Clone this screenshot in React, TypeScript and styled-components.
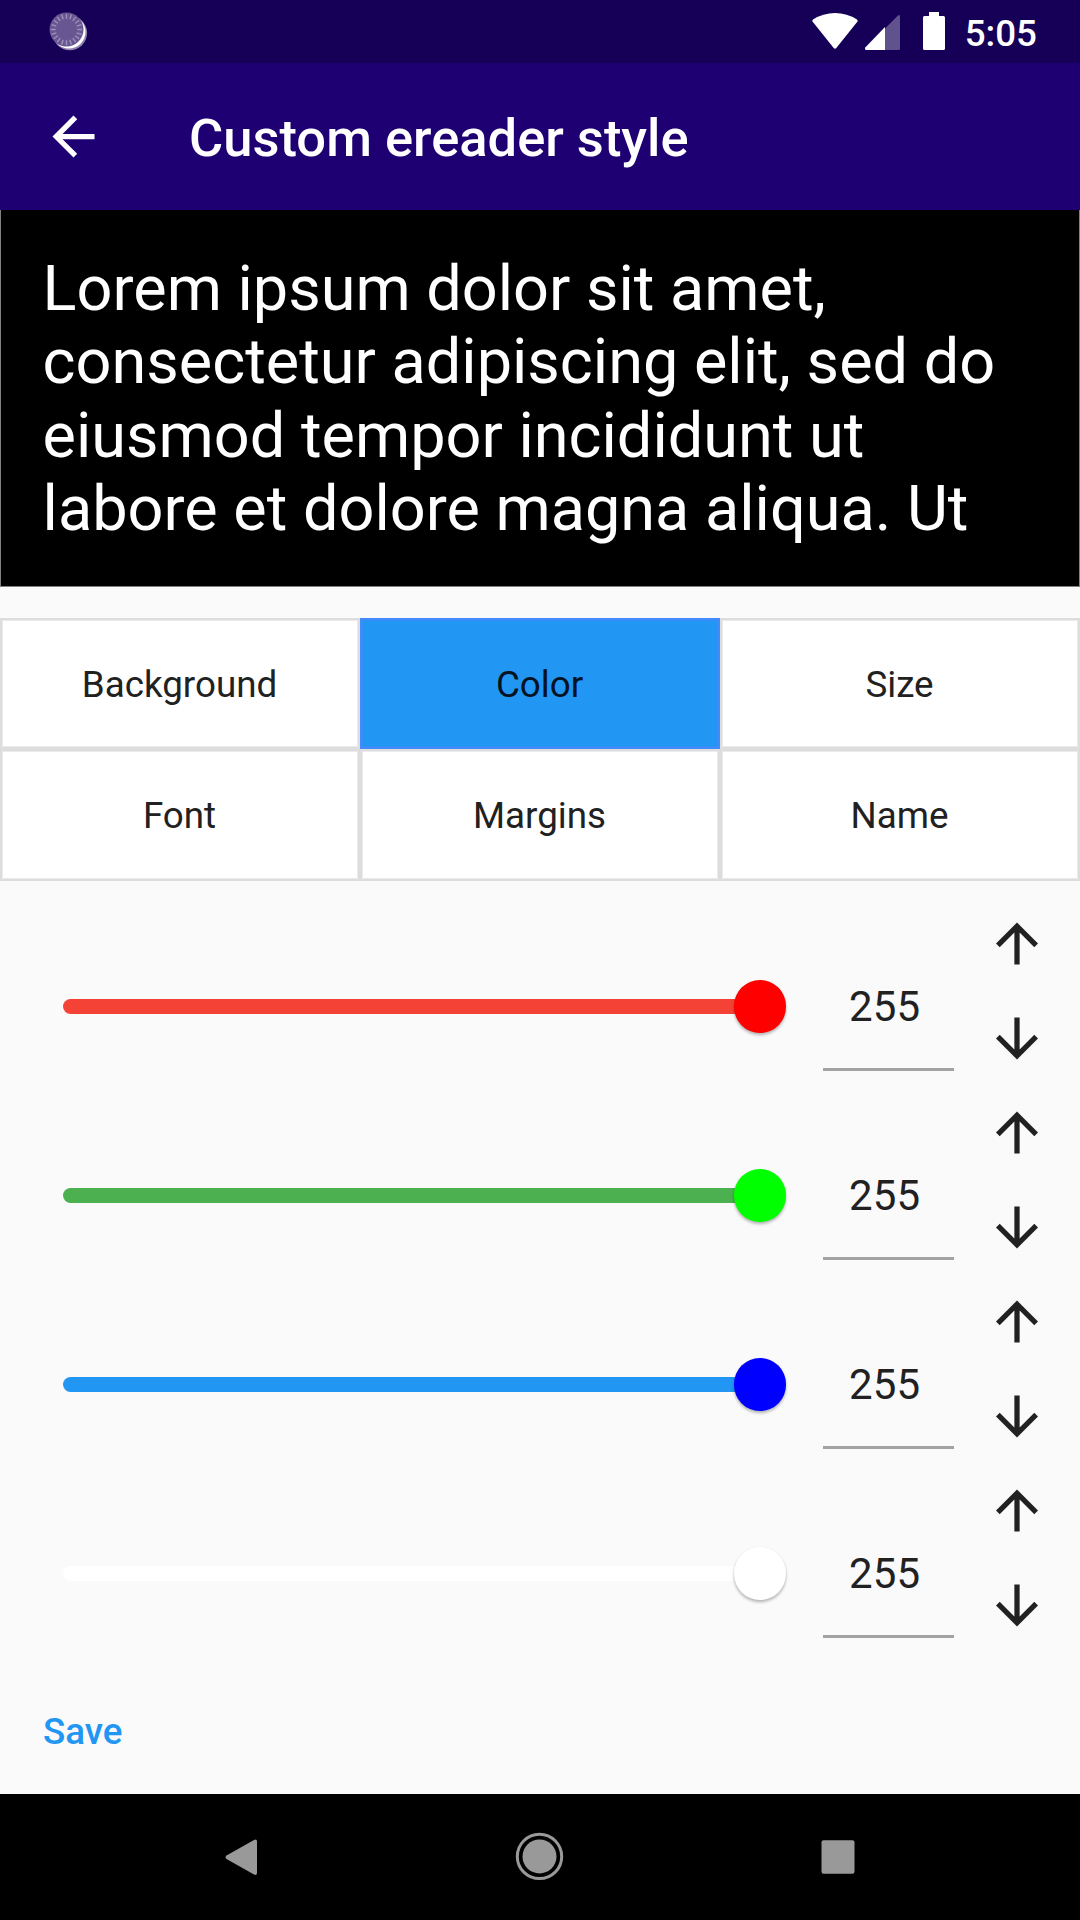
import React, { useState } from "react";
import styled, { createGlobalStyle } from "styled-components";

const GlobalStyle = createGlobalStyle`
  * { box-sizing: border-box; }
  body { margin: 0; background: #fafafa; }
  button { border: 0; padding: 0; margin: 0; background: none; font: inherit; color: inherit; }
`;

const Screen = styled.div`
  width: 1080px;
  height: 1920px;
  display: flex;
  flex-direction: column;
  overflow: hidden;
  background: #fafafa;
  color: #212121;
  font-family: Roboto, "Liberation Sans", sans-serif;
`;

const StatusBar = styled.div`
  flex: none;
  height: 63px;
  display: flex;
  align-items: flex-start;
  justify-content: space-between;
  padding-left: 48px;
  padding-right: 43px;
  background: #160057;
  color: #fff;
`;

const StatusGroup = styled.div`
  display: flex;
  height: 63px;
`;

const Clock = styled.span`
  margin-left: 16px;
  font-size: 36.75px;
  font-weight: 500;
  line-height: 67px;
`;

const AppBar = styled.header`
  flex: none;
  height: 147px;
  display: flex;
  align-items: center;
  padding-left: 42px;
  background: #1e0073;
  color: #fff;
`;

const Title = styled.h1`
  margin: 0 0 0 84px;
  padding-top: 2px;
  font-size: 52.5px;
  font-weight: 500;
  line-height: 62px;
  white-space: nowrap;
`;

const IconButton = styled.button`
  display: flex;
  height: 63px;
`;

const Preview = styled.section`
  flex: none;
  height: 377px;
  border: 1px solid #808080;
  border-top: 0;
  padding: 41.6px 41px 0 41.6px;
  background: #000;
  color: #fff;
  font-size: 63px;
  line-height: 73.5px;
`;

const Tabs = styled.nav`
  flex: none;
  display: grid;
  grid-template-columns: repeat(3, 360px);
  grid-template-rows: 131px 132px;
  margin-top: 31px;
`;

const Tab = styled.button<{ $active: boolean }>`
  display: flex;
  align-items: center;
  justify-content: center;
  border: 2px solid ${(p) => (p.$active ? "#448aff" : "#ddd")};
  box-shadow: inset 0 0 0 1px ${(p) => (p.$active ? "#338ffa" : "#ebebeb")};
  background: ${(p) => (p.$active ? "#2196f3" : "#fff")};
  color: ${(p) => (p.$active ? "#04131f" : "#212121")};
  font-size: 36.75px;
  line-height: 44px;
  padding: 2px 1px 0 0;

  &:nth-child(-n + 3) {
    padding-top: 3px;
  }
`;

const Channels = styled.section`
  flex: none;
  display: flex;
  flex-direction: column;
  margin-top: 31px;
`;

const ChannelRow = styled.div`
  height: 189px;
  display: flex;
  align-items: center;
  padding-left: 63px;
`;

const Slider = styled.div`
  flex: none;
  width: 723px;
  height: 53px;
  display: flex;
  align-items: center;
`;

const Track = styled.div<{ $color: string }>`
  flex: none;
  width: 697px;
  height: 15.75px;
  margin-right: -26.5px;
  border-radius: 8px;
  background: ${(p) => p.$color};
`;

const Thumb = styled.div<{ $color: string }>`
  flex: none;
  width: 52.5px;
  height: 52.5px;
  border-radius: 50%;
  background: ${(p) => p.$color};
  box-shadow: 0 2.5px 3px rgba(0, 0, 0, 0.2), 0 1px 3px rgba(0, 0, 0, 0.12);
`;

const ValueField = styled.div`
  align-self: stretch;
  width: 131px;
  height: 159px;
  margin-left: 37px;
  border-bottom: 3px solid #a3a3a3;
  padding-left: 26px;
  padding-top: 53px;
  font-size: 42px;
  line-height: 84px;
  letter-spacing: 0.1px;
`;

const Stepper = styled.div`
  align-self: stretch;
  display: flex;
  flex-direction: column;
  gap: 31.5px;
  margin-left: 31px;
`;

const Actions = styled.div`
  flex: 1;
  padding: 42px 43px 0;
`;

const SaveButton = styled.button`
  color: #2196f3;
  font-size: 36.75px;
  font-weight: 500;
  line-height: 43px;
`;

const NavBar = styled.footer`
  flex: none;
  height: 126px;
  background: #000;
  display: flex;
  align-items: center;
  justify-content: center;
  gap: 235px;
`;

const SyncIcon = () => {
  const ticks = Array.from({ length: 20 }, (_, i) => i * 18);
  return (
    <svg width="42" height="63" viewBox="48 0 42 63">
      <circle cx="69.8" cy="33" r="17.3" fill="#8f83ae" />
      <circle cx="68.9" cy="31.9" r="16.6" fill="#fff" />
      <circle cx="66.5" cy="29.5" r="17" fill="#675691" />
      {ticks.map((a) => (
        <path key={a} d="M66.5 13.8v5" stroke="#9d92b8" strokeWidth="1.4" transform={`rotate(${a} 66.5 29.5)`} />
      ))}
    </svg>
  );
};

const StatusIcons = () => (
  <svg width="141" height="63" viewBox="808 0 141 63" fill="#fff">
    <path d="M812.5 21.5Q812 20.5 813 19.5Q823 13 835 13Q847 13 857 19.5Q858 20.5 857.5 21.5L836.3 48Q835 49.6 833.7 48Z" />
    <path d="M885 28.5L898 15.5Q900 14 900 16.5V48.5Q900 50 898.5 50H885Z" fillOpacity=".32" />
    <path d="M885 27V50H866.5Q864 50 865.5 47.3Z" />
    <path d="M929 12H939V16H943.5Q945 16 945 17.5V48.5Q945 50 943.5 50H924.5Q923 50 923 48.5V17.5Q923 16 924.5 16H929Z" />
  </svg>
);

const ARROWS = {
  back: "M20 11H7.83l5.59-5.59L12 4l-8 8 8 8 1.41-1.41L7.83 13H20v-2z",
  up: "M4 12l1.41 1.41L11 7.83V20h2V7.83l5.58 5.59L20 12l-8-8-8 8z",
  down: "M20 12l-1.41-1.41L13 16.17V4h-2v12.17l-5.58-5.59L4 12l8 8 8-8z",
};

const Arrow = ({ kind }: { kind: keyof typeof ARROWS }) => (
  <svg width={kind === "back" ? 63 : 64} height="63" viewBox="0 0 24 24" fill="currentColor">
    <path d={ARROWS[kind]} />
  </svg>
);

const TABS = ["Background", "Color", "Size", "Font", "Margins", "Name"];

const CHANNELS = [
  { name: "red", track: "#f44336", thumb: "#ff0000" },
  { name: "green", track: "#4caf50", thumb: "#00ff00" },
  { name: "blue", track: "#2196f3", thumb: "#0000ff" },
  { name: "alpha", track: "#ffffff", thumb: "#ffffff" },
];

export default function App() {
  const [tab, setTab] = useState("Color");
  return (
    <Screen>
      <GlobalStyle />
      <StatusBar>
        <SyncIcon />
        <StatusGroup>
          <StatusIcons />
          <Clock>5:05</Clock>
        </StatusGroup>
      </StatusBar>
      <AppBar>
        <IconButton>
          <Arrow kind="back" />
        </IconButton>
        <Title>Custom ereader style</Title>
      </AppBar>
      <Preview>
        Lorem ipsum dolor sit amet, consectetur adipiscing elit, sed do eiusmod tempor incididunt ut
        labore et dolore magna aliqua. Ut
      </Preview>
      <Tabs>
        {TABS.map((t) => (
          <Tab key={t} $active={t === tab} onClick={() => setTab(t)}>
            {t}
          </Tab>
        ))}
      </Tabs>
      <Channels>
        {CHANNELS.map((c) => (
          <ChannelRow key={c.name}>
            <Slider>
              <Track $color={c.track} />
              <Thumb $color={c.thumb} />
            </Slider>
            <ValueField>255</ValueField>
            <Stepper>
              <IconButton>
                <Arrow kind="up" />
              </IconButton>
              <IconButton>
                <Arrow kind="down" />
              </IconButton>
            </Stepper>
          </ChannelRow>
        ))}
      </Channels>
      <Actions>
        <SaveButton>Save</SaveButton>
      </Actions>
      <NavBar>
        <svg width="64" height="64" viewBox="0 0 64 64" fill="#999">
          <path d="M17.5 30.5L45 15Q48 13.5 48 16.6V47.8Q48 51 45 49.6L17.5 34Q15.4 32.3 17.5 30.5Z" />
        </svg>
        <svg width="64" height="64" viewBox="0 0 64 64">
          <circle cx="31.5" cy="31.4" r="22.2" fill="none" stroke="#999" strokeWidth="3" />
          <circle cx="31.5" cy="31.4" r="17" fill="#999" />
        </svg>
        <svg width="64" height="64" viewBox="0 0 64 64">
          <rect x="14.5" y="15.3" width="33" height="33.4" rx="2" fill="#999" />
        </svg>
      </NavBar>
    </Screen>
  );
}
